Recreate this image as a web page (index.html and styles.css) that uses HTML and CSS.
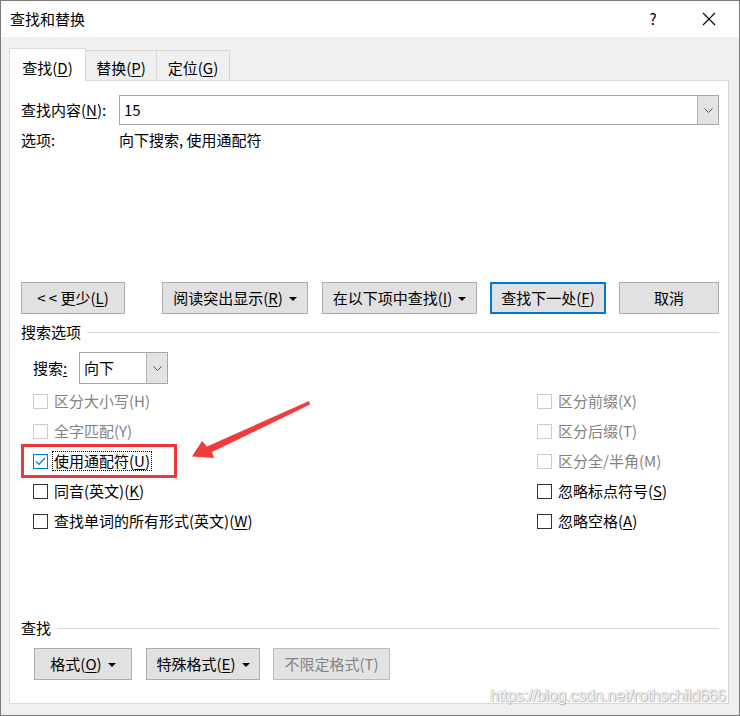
FILE: index.html
```html
<!DOCTYPE html>
<html>

<head>
    <meta charset="utf-8" />
    <title>查找和替换</title>
    <link rel="stylesheet" href="styles.css">
</head>

<body>
    <div class="window">
        <div class="titlebar">
            <span class="title">查找和替换</span>
            <span class="help">?</span>
            <span class="close">
                <svg width="14" height="14" viewBox="0 0 14 14"><path d="M1 1L13 13M13 1L1 13" stroke="#000" stroke-width="1.1" fill="none" /></svg>
            </span>
        </div>
        <div class="body">
            <div class="tabs">
                <div class="tab active">查找(<u>D</u>)</div>
                <div class="tab">替换(<u>P</u>)</div>
                <div class="tab">定位(<u>G</u>)</div>
            </div>
            <div class="panel">
                <div class="find-row">
                    <span class="find-label">查找内容(<u>N</u>):</span>
                    <div class="combo">
                        <span class="combo-text">15</span>
                        <span class="combo-btn">
                            <svg width="9" height="5" viewBox="0 0 9 5"><path d="M0.5 0.5L4.5 4.5L8.5 0.5" stroke="#555" fill="none" /></svg>
                        </span>
                    </div>
                </div>
                <div class="opts-row">
                    <span class="find-label">选项:</span>
                    <span>向下搜索, 使用通配符</span>
                </div>
                <div class="btn-row">
                    <button class="btn b-less">&lt; &lt; 更少(<u>L</u>)</button>
                    <button class="btn b-read">阅读突出显示(<u>R</u>)<i class="caret"></i></button>
                    <button class="btn b-in">在以下项中查找(<u>I</u>)<i class="caret"></i></button>
                    <button class="btn b-next default">查找下一处(<u>F</u>)</button>
                    <button class="btn b-cancel">取消</button>
                </div>
                <div class="section">
                    <span>搜索选项</span>
                    <i class="rule"></i>
                </div>
                <div class="search-row">
                    <span class="search-label">搜索<u>:</u></span>
                    <div class="select">
                        <span class="select-text">向下</span>
                        <span class="select-btn">
                            <svg width="9" height="5" viewBox="0 0 9 5"><path d="M0.5 0.5L4.5 4.5L8.5 0.5" stroke="#555" fill="none" /></svg>
                        </span>
                    </div>
                </div>
                <div class="checks">
                    <div class="check disabled"><i class="box"></i><span>区分大小写(H)</span></div>
                    <div class="check disabled"><i class="box"></i><span>区分前缀(X)</span></div>
                    <div class="check disabled"><i class="box"></i><span>全字匹配(Y)</span></div>
                    <div class="check disabled"><i class="box"></i><span>区分后缀(T)</span></div>
                    <div class="check checked">
                        <i class="box"><svg width="13" height="13" viewBox="0 0 13 13"><path d="M2 6.5L5 9.5L11 3" stroke="#0078d7" stroke-width="1.2" fill="none" /></svg></i>
                        <span class="focus">使用通配符(<u>U</u>)</span>
                    </div>
                    <div class="check disabled"><i class="box"></i><span>区分全/半角(M)</span></div>
                    <div class="check"><i class="box"></i><span>同音(英文)(<u>K</u>)</span></div>
                    <div class="check"><i class="box"></i><span>忽略标点符号(<u>S</u>)</span></div>
                    <div class="check"><i class="box"></i><span>查找单词的所有形式(英文)(<u>W</u>)</span></div>
                    <div class="check"><i class="box"></i><span>忽略空格(<u>A</u>)</span></div>
                </div>
                <div class="section section-find">
                    <span>查找</span>
                    <i class="rule"></i>
                </div>
                <div class="btn-row bottom-row">
                    <button class="btn b-format">格式(<u>O</u>)<i class="caret"></i></button>
                    <button class="btn b-special">特殊格式(<u>E</u>)<i class="caret"></i></button>
                    <button class="btn b-nolimit" disabled>不限定格式(T)</button>
                </div>
            </div>
        </div>

        <!-- annotation drawn on top of the screenshot -->
        <svg class="marks" width="740" height="716" viewBox="0 0 740 716">
            <rect x="22.5" y="445.5" width="153" height="31" fill="none" stroke="#ef3838" stroke-width="3" />
            <polygon points="309,401 310,404.5 212,452 214,458 192,456.5 202,441 207,446.5" fill="#f23c3c" />
        </svg>
        <span class="watermark">https://blog.csdn.net/rothschild666</span>
    </div>
</body>

</html>
```

FILE: styles.css
```css
* {
    box-sizing: border-box;
    margin: 0;
    padding: 0;
}

body {
    background: #fff;
    font-family: "Noto Sans CJK SC", "Noto Sans", sans-serif;
    font-size: 15px;
    line-height: 18px;
    color: #000;
}

u {
    text-decoration: underline;
    text-underline-offset: 2px;
}

.window {
    position: relative;
    width: 740px;
    height: 716px;
    border: 1px solid #7a7a7a;
    background: #f0f0f0;
}

.titlebar {
    height: 36px;
    background: #fff;
    display: flex;
    align-items: center;
    padding-left: 9px;
}

.title {
    flex: 1;
}

.help {
    width: 14px;
    text-align: center;
    margin-right: 42px;
}

.close {
    display: flex;
    margin-right: 23px;
}

.body {
    padding: 11px 10px 11px 8px;
}

.tabs {
    display: flex;
    align-items: flex-end;
    height: 32px;
}

.tab {
    height: 30px;
    border: 1px solid #d9d9d9;
    border-bottom: none;
    margin-left: -1px;
    display: flex;
    justify-content: center;
    padding-top: 8px;
}

.tab:nth-child(2) {
    width: 72px;
}

.tab:nth-child(3) {
    width: 74px;
}

.tab.active {
    position: relative;
    z-index: 1;
    width: 77px;
    height: 33px;
    margin-left: 0;
    margin-bottom: -1px;
    padding-top: 10px;
    background: #fff;
}

.tab.active + .tab {
    margin-left: -1px;
}

.panel {
    height: 624px;
    border: 1px solid #d9d9d9;
    background: #fff;
    padding: 14px 9px 0 11px;
}

.find-row {
    display: flex;
    height: 30px;
    align-items: center;
}

.find-label {
    width: 98px;
}

.combo {
    width: 600px;
    height: 30px;
    border: 1px solid #a6a6a6;
    display: flex;
}

.combo-text {
    flex: 1;
    padding-left: 4px;
    line-height: 27px;
}

.combo-btn,
.select-btn {
    width: 21px;
    background: #e3e3e3;
    border-left: 1px solid #b4b4b4;
    display: flex;
    align-items: center;
    justify-content: center;
}

.opts-row {
    display: flex;
    margin-top: 6px;
}

.btn-row {
    display: flex;
    margin-top: 133px;
}

.btn {
    height: 32px;
    font: inherit;
    color: #000;
    background: #e1e1e1;
    border: 1px solid #adadad;
    display: flex;
    align-items: center;
    justify-content: center;
}

.btn.default {
    border: 2px solid #0078d7;
}

.btn[disabled] {
    color: #838383;
    border-color: #bfbfbf;
    background: #e3e3e3;
}

.caret {
    width: 0;
    height: 0;
    border-left: 4px solid transparent;
    border-right: 4px solid transparent;
    border-top: 4px solid #000;
    margin-left: 6px;
    margin-top: 1px;
}

.b-less { width: 104px; }
.b-read { width: 146px; margin-left: 37px; }
.b-in { width: 155px; margin-left: 14px; }
.b-next { width: 116px; margin-left: 13px; }
.b-cancel { width: 100px; margin-left: 13px; }

.section {
    display: flex;
    align-items: center;
    margin-top: 9px;
}

.rule {
    flex: 1;
    height: 1px;
    background: #dcdcdc;
    margin-left: 6px;
}

.search-row {
    display: flex;
    align-items: center;
    margin-top: 11px;
    padding-left: 12px;
}

.search-label {
    width: 46px;
}

.select {
    width: 89px;
    height: 32px;
    border: 1px solid #a6a6a6;
    display: flex;
}

.select-text {
    flex: 1;
    padding-left: 4px;
    line-height: 29px;
}

.checks {
    display: grid;
    grid-template-columns: 504px 1fr;
    grid-auto-rows: 30px;
    margin-top: 2px;
    padding-left: 12px;
}

.check {
    display: flex;
    align-items: center;
}

.box {
    width: 15px;
    height: 15px;
    border: 1px solid #333;
    margin-right: 6px;
    display: flex;
    align-items: center;
    justify-content: center;
}

.check.disabled {
    color: #838383;
}

.check.disabled .box {
    border-color: #cccccc;
}

.check.checked .box {
    border-color: #0078d7;
}

.focus {
    outline: 1px dotted #000;
    padding: 0 1px;
    margin-left: -1px;
}

.section-find {
    margin-top: 83px;
}

.bottom-row {
    margin-top: 11px;
    padding-left: 13px;
}

.b-format { width: 98px; }
.b-special { width: 114px; margin-left: 14px; }
.b-nolimit { width: 117px; margin-left: 13px; }

.marks {
    position: absolute;
    left: -1px;
    top: -1px;
    pointer-events: none;
}

.watermark {
    position: absolute;
    left: 489px;
    top: 686px;
    font-family: "Liberation Sans", Arial, sans-serif;
    font-size: 16px;
    letter-spacing: -0.2px;
    color: rgba(255, 255, 255, 0.92);
    text-shadow: 0 0 1px #9a9a9a, 1px 1px 1px #b5b5b5;
    white-space: nowrap;
}
```
